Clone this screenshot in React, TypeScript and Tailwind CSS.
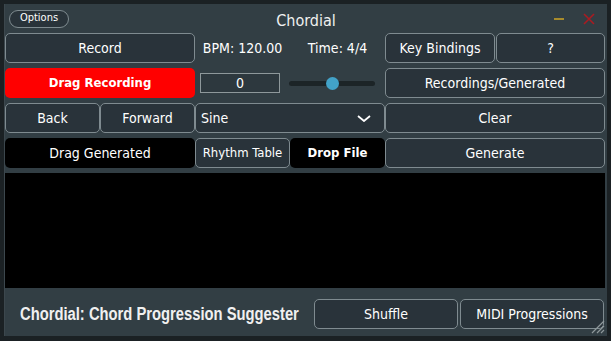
import React from 'react';

interface BtnProps {
  children?: React.ReactNode;
  className?: string;
}

// outlined JUCE-style text button
function Btn({ children, className = '' }: BtnProps) {
  return (
    <div
      className={`flex items-center justify-center rounded-[5px] border border-[#7f8b90] bg-[#29333a] text-white ${className}`}
    >
      {children}
    </div>
  );
}

export default function App() {
  return (
    <div className="h-[341px] w-[611px] bg-[#1b2124] pt-[4px] pr-[4px] pb-[5px] pl-[4px] text-[14px] font-['DejaVu_Sans_Condensed','DejaVu_Sans',sans-serif]">
      <div className="relative flex h-full flex-col border-l border-[#3c474d] bg-[#323e44]">
        {/* title bar */}
        <div className="relative flex h-[29px] items-center">
          <div className="ml-[4px] flex h-[18px] w-[60px] items-center justify-center rounded-full border border-[#7f8b90] bg-[#29333a] text-[11px] text-white">
            Options
          </div>
          <div className="absolute left-0 right-0 top-[7px] text-center text-[16px] leading-[20px] text-[#f0f0f0]">
            Chordial
          </div>
          <div className="ml-auto mr-[12px] flex items-center gap-[19px]">
            <div className="h-[2px] w-[10px] bg-[#a88b2c]" />
            <svg width="12" height="12" viewBox="0 0 12 12">
              <path d="M1 1 L11 11 M11 1 L1 11" stroke="#a81c22" strokeWidth="1.6" />
            </svg>
          </div>
        </div>

        {/* controls grid */}
        <div className="grid grid-cols-[95px_95px_95px_95px_110px_110px] grid-rows-[30px_30px_30px_30px] gap-y-[5px]">
          {/* row 1 */}
          <Btn className="col-span-2">Record</Btn>
          <div className="flex items-center justify-center text-white">BPM: 120.00</div>
          <div className="flex items-center justify-center text-white">Time: 4/4</div>
          <Btn>Key Bindings</Btn>
          <Btn className="ml-[1px]">?</Btn>

          {/* row 2 */}
          <div className="col-span-2 flex items-center justify-center rounded-[5px] bg-[#ff0000] text-[13px] font-bold text-white">
            Drag Recording
          </div>
          <div className="flex items-center pl-[5px]">
            <div className="flex h-[20px] w-[80px] items-center justify-center border border-[#8e989b] bg-[#2d383e] text-white">
              0
            </div>
          </div>
          <div className="flex items-center pr-[9px]">
            <div className="relative -ml-[1px] h-[5px] w-full rounded-full bg-[#1c2427]">
              <div className="absolute left-[37px] top-[-4px] h-[13px] w-[13px] rounded-full bg-[#42a2c8]" />
            </div>
          </div>
          <Btn className="col-span-2">Recordings/Generated</Btn>

          {/* row 3 */}
          <Btn>Back</Btn>
          <Btn>Forward</Btn>
          <div className="col-span-2 flex items-center justify-between rounded-[5px] border border-[#7f8b90] bg-[#29333a] pl-[5px] pr-[13px] text-white">
            <span>Sine</span>
            <svg width="14" height="7" viewBox="0 0 14 7">
              <path d="M1 1 L7 6 L13 1" stroke="white" strokeWidth="1.8" fill="none" />
            </svg>
          </div>
          <Btn className="col-span-2">Clear</Btn>

          {/* row 4 */}
          <div className="col-span-2 flex items-center justify-center rounded-[5px] bg-black text-white">
            Drag Generated
          </div>
          <Btn className="text-[13px]">Rhythm Table</Btn>
          <div className="flex items-center justify-center rounded-[5px] bg-black text-[13px] font-bold text-white">
            Drop File
          </div>
          <Btn className="col-span-2">Generate</Btn>
        </div>

        {/* output area */}
        <div className="mt-[5px] mr-[2px] h-[115px] bg-black" />

        {/* bottom bar */}
        <div className="flex flex-1 items-center pt-[4px] pr-[3px]">
          <div className="w-[300px] shrink-0 pl-[15px]">
            <div className="origin-left scale-x-[0.82] whitespace-nowrap font-['Liberation_Sans',Arial,sans-serif] text-[18px] font-bold text-[#f0f0f0]">
              Chordial: Chord Progression Suggester
            </div>
          </div>
          <div className="ml-auto flex shrink-0 gap-[2px]">
            <Btn className="h-[30px] w-[144px]">Shuffle</Btn>
            <Btn className="h-[30px] w-[144px]">MIDI Progressions</Btn>
          </div>
        </div>

        {/* resize corner */}
        <svg className="absolute bottom-[2px] right-[2px]" width="18" height="18" viewBox="0 0 18 18">
          <path d="M17 5 L5 17 M17 10 L10 17 M17 14 L14 17" stroke="#8e989b" strokeWidth="1.2" />
        </svg>
      </div>
    </div>
  );
}
